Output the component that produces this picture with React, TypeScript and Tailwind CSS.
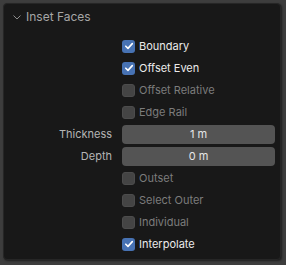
import React from "react";

const font = { fontFamily: "Inter, 'Noto Sans', sans-serif" };

function Check({ checked, label, dim }: { checked?: boolean; label: string; dim?: boolean }) {
  return (
    <div className="flex items-center h-[22px]">
      <div className="w-[121px] shrink-0" />
      <div
        className={
          "w-[13px] h-[13px] rounded-[3px] flex items-center justify-center " +
          (checked ? "bg-[#4772b3]" : "bg-[#444444] border border-[#4c4c4c]")
        }
      >
        {checked && (
          <svg width="10" height="10" viewBox="0 0 10 10">
            <path d="M1.8 5.2 L4 7.4 L8.3 2.6" fill="none" stroke="#ffffff" strokeWidth="1.6" strokeLinecap="round" strokeLinejoin="round" />
          </svg>
        )}
      </div>
      <span className={"ml-[4px] text-[11px] " + (dim ? "text-[#7c7c7c]" : "text-[#ebebeb]")}>{label}</span>
    </div>
  );
}

function Field({ label, value }: { label: string; value: string }) {
  return (
    <div className="flex items-center h-[22px]">
      <div className="w-[111px] shrink-0 text-right text-[11px] text-[#b5b5b5]">{label}</div>
      <div className="ml-[10px] w-[153px] h-[19px] rounded-[4px] bg-[#545454] flex items-center justify-center text-[11px] text-[#e6e6e6]">
        {value}
      </div>
    </div>
  );
}

export default function App() {
  return (
    <div className="w-[286px] h-[265px] bg-[#3d3d3d] p-[3px] pr-[5px] pb-[5px]" style={font}>
      <div className="w-[278px] h-[257px] bg-[#181818] rounded-[4px] border border-[#262626] shadow-[1px_1px_2px_rgba(0,0,0,0.5)]">
        <div className="flex items-center h-[26px] pl-[8px]">
          <svg width="10" height="10" viewBox="0 0 10 10" className="mr-[4px]">
            <path d="M1.5 3.5 L5 7 L8.5 3.5" fill="none" stroke="#8c8c8c" strokeWidth="1" />
          </svg>
          <span className="text-[12px] text-[#a6a6a6]">Inset Faces</span>
        </div>
        <div className="flex flex-col pt-[5px] -ml-[3px]">
          <Check checked label="Boundary" />
          <Check checked label="Offset Even" />
          <Check label="Offset Relative" dim />
          <Check label="Edge Rail" dim />
          <Field label="Thickness" value="1 m" />
          <Field label="Depth" value="0 m" />
          <Check label="Outset" dim />
          <Check label="Select Outer" dim />
          <Check label="Individual" dim />
          <Check checked label="Interpolate" />
        </div>
      </div>
    </div>
  );
}
